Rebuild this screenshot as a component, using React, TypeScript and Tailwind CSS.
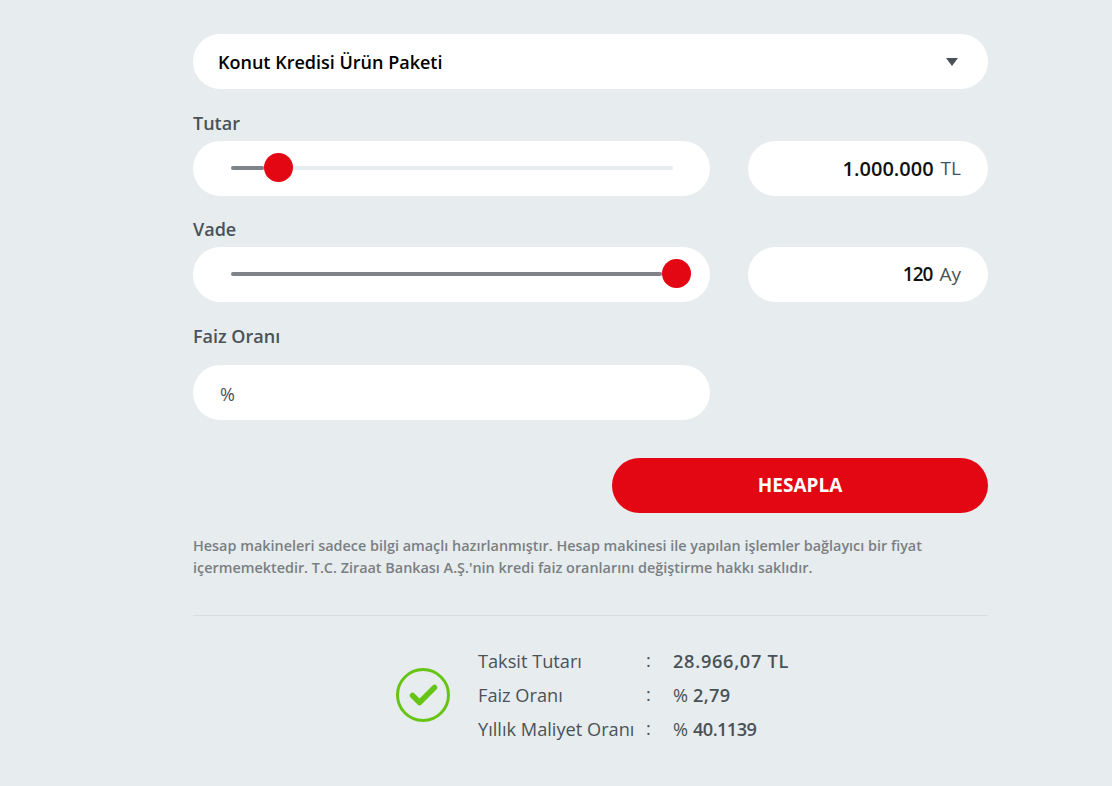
const font = "font-['Open_Sans',sans-serif]";

const SliderRow = ({
  label,
  labelClass,
  fill,
  value,
  valueClass,
  unit,
}: {
  label: string;
  labelClass: string;
  fill: number;
  value: string;
  valueClass: string;
  unit: string;
}) => (
  <div>
    <div className={`${labelClass} text-[18px] leading-[24px] font-semibold text-[#4a5257]`}>{label}</div>
    <div className="flex justify-between">
      <div className="w-[517px] h-[55px] rounded-[28px] bg-white flex items-center pl-[38px] pr-[37px] pb-[1px]">
        <div className="relative w-full h-[4px] rounded-full bg-[#e7ecee]">
          <div className="h-full rounded-full bg-[#7f8488]" style={{ width: `${fill}px` }}></div>
          <div
            className="absolute top-[-13px] w-[29px] h-[29px] rounded-full bg-[#e30613]"
            style={{ left: `${fill}px` }}
          ></div>
        </div>
      </div>
      <div className="w-[240px] h-[55px] rounded-[28px] bg-white flex items-center justify-end pr-[27px]">
        <span className={`${valueClass} font-semibold text-[#111]`}>{value}</span>
        <span className="ml-[7px] text-[19px] text-[#4a5257]">{unit}</span>
      </div>
    </div>
  </div>
);

const ResultRow = ({
  label,
  prefix,
  value,
  valueClass,
}: {
  label: string;
  prefix?: string;
  value: string;
  valueClass: string;
}) => (
  <div className="flex items-center h-[34px] pt-[1px] text-[18.2px] text-[#4a5257]">
    <span className="w-[168px]">{label}</span>
    <span className="w-[27px] pb-[2px]">:</span>
    <span>
      {prefix && <span className="mr-[5px]">{prefix}</span>}
      <span className={`${valueClass} font-semibold`}>{value}</span>
    </span>
  </div>
);

export default function App() {
  return (
    <div className={`min-h-[786px] bg-[#e7ecee] ${font}`}>
      <div className="ml-[193px] w-[795px] pt-[34px]">
        <div className="h-[55px] rounded-[28px] bg-white flex items-center justify-between pl-[25px] pr-[29px]">
          <span className="pt-[1px] text-[18px] font-semibold text-black">Konut Kredisi Ürün Paketi</span>
          <svg width="14" height="8" viewBox="0 0 14 8">
            <path d="M1 0h12L7 8z" fill="#4a5257" />
          </svg>
        </div>

        <SliderRow
          label="Tutar"
          labelClass="h-[52px] pt-[22px]"
          fill={33}
          value="1.000.000"
          valueClass="text-[20px]"
          unit="TL"
        />
        <SliderRow
          label="Vade"
          labelClass="h-[51px] pt-[21px]"
          fill={431}
          value="120"
          valueClass="text-[19px] tracking-[-1px]"
          unit="Ay"
        />

        <div className="h-[63px] pt-[22px] text-[18px] leading-[24px] font-semibold text-[#4a5257]">Faiz Oranı</div>
        <div className="w-[517px] h-[55px] rounded-[28px] bg-white flex items-center pl-[27px] pt-[3px] text-[18px] text-[#4a5257]">
          %
        </div>

        <div className="flex justify-end mt-[38px]">
          <button className="w-[376px] h-[55px] rounded-[28px] bg-[#e30613] text-white text-[19px] font-bold">
            HESAPLA
          </button>
        </div>

        <p className="mt-[22px] text-[14.4px] leading-[22px] font-semibold text-[#7a7f83]">
          Hesap makineleri sadece bilgi amaçlı hazırlanmıştır. Hesap makinesi ile yapılan işlemler bağlayıcı bir fiyat
          <br />
          içermemektedir. T.C. Ziraat Bankası A.Ş.'nin kredi faiz oranlarını değiştirme hakkı saklıdır.
        </p>

        <div className="mt-[36px] border-t border-[#d9dee0]"></div>

        <div className="flex items-center mt-[28px] pl-[203px]">
          <svg width="54" height="54" viewBox="0 0 54 54" className="mr-[28px]">
            <circle cx="27" cy="27" r="25.5" fill="none" stroke="#66c514" strokeWidth="3" />
            <path d="M16.5 27.5l7 7 15-15" fill="none" stroke="#66c514" strokeWidth="5.5" strokeLinecap="round" strokeLinejoin="round" />
          </svg>
          <div>
            <ResultRow label="Taksit Tutarı" value="28.966,07 TL" valueClass="tracking-[0.7px]" />
            <ResultRow label="Faiz Oranı" prefix="%" value="2,79" valueClass="tracking-[0.3px]" />
            <ResultRow label="Yıllık Maliyet Oranı" prefix="%" value="40.1139" valueClass="tracking-[-0.6px]" />
          </div>
        </div>
      </div>
    </div>
  );
}
